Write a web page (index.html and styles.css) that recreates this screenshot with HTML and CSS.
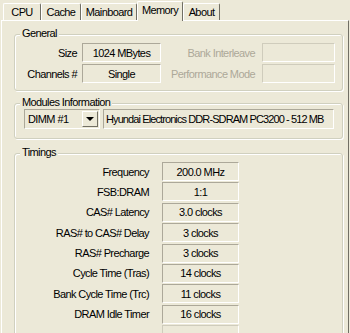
FILE: index.html
```html
<!DOCTYPE html>
<html lang="en">
<head>
    <meta charset="UTF-8">
    <title>CPU-Z Memory</title>
    <link rel="stylesheet" href="styles.css">
</head>
<body>
    <!-- tab strip -->
    <div class="tabs">
        <div class="tab tab-cpu">CPU</div>
        <div class="tab tab-cache">Cache</div>
        <div class="tab tab-board">Mainboard</div>
        <div class="tab tab-mem active">Memory</div>
        <div class="tab tab-about">About</div>
    </div>

    <div class="page">
        <!-- General -->
        <div class="group general">
            <div class="group-title">General</div>
            <div class="gen-rows">
                <div class="gen-row">
                    <span class="gen-label">Size</span>
                    <span class="field gen-val">1024 MBytes</span>
                    <span class="gen-label2 disabled">Bank Interleave</span>
                    <span class="field off gen-val2"></span>
                </div>
                <div class="gen-row">
                    <span class="gen-label">Channels #</span>
                    <span class="field gen-val">Single</span>
                    <span class="gen-label2 disabled">Performance Mode</span>
                    <span class="field off gen-val2"></span>
                </div>
            </div>
        </div>

        <!-- Modules Information -->
        <div class="group modules">
            <div class="group-title">Modules Information</div>
            <div class="mod-row">
                <div class="combo">
                    <span class="combo-text">DIMM #1</span>
                    <span class="combo-btn"><i class="arrow"></i></span>
                </div>
                <div class="field mod-desc">Hyundai Electronics DDR-SDRAM PC3200 - 512 MB</div>
            </div>
        </div>

        <!-- Timings -->
        <div class="group timings">
            <div class="group-title">Timings</div>
            <div class="tim-grid">
                <span class="tim-label">Frequency</span><span class="field tim-val">200.0 MHz</span>
                <span class="tim-label">FSB:DRAM</span><span class="field tim-val">1:1</span>
                <span class="tim-label">CAS# Latency</span><span class="field tim-val">3.0 clocks</span>
                <span class="tim-label">RAS# to CAS# Delay</span><span class="field tim-val">3 clocks</span>
                <span class="tim-label">RAS# Precharge</span><span class="field tim-val">3 clocks</span>
                <span class="tim-label">Cycle Time (Tras)</span><span class="field tim-val">14 clocks</span>
                <span class="tim-label">Bank Cycle Time (Trc)</span><span class="field tim-val">11 clocks</span>
                <span class="tim-label">DRAM Idle Timer</span><span class="field tim-val">16 clocks</span>
                <span class="tim-label"></span><span class="field off tim-val"></span>
            </div>
        </div>
    </div>
</body>
</html>
```

FILE: styles.css
```css
body { margin: 0; width: 350px; height: 333px; overflow: hidden; background: #ECE9D8; color: #000; font-family: "Liberation Sans", Arial, sans-serif; font-size: 11px; letter-spacing: -0.6px; }

/* tabs */
.tabs { display: flex; align-items: flex-end; height: 20px; padding-left: 3px; }
.tab { box-sizing: border-box; height: 17px; display: flex; align-items: center; justify-content: center; padding-bottom: 1px; border-top: 1px solid #fff; border-left: 1px solid #fff; border-right: 1px solid #716F64; border-radius: 2px 2px 0 0; }
.tab-cpu { width: 38px; }
.tab-cache { width: 40px; }
.tab-board { width: 56px; }
.tab-mem { width: 46px; }
.tab-about { width: 37px; }
.tab.active { position: relative; z-index: 1; height: 20px; margin-bottom: -1px; padding-bottom: 3px; background: #ECE9D8; }

/* tab page */
.page { height: 312px; margin: 0 1px; padding-left: 12px; border-top: 1px solid #fff; border-left: 1px solid #fff; border-right: 1px solid #716F64; }

/* group boxes */
.group { box-sizing: border-box; width: 329px; border: 1px solid #D0D0BF; border-radius: 3px; box-shadow: inset 1px 1px 0 #fff, 1px 1px 0 #fff; }
.group-title { display: table; margin: -8px 0 0 5px; padding: 0 2px; line-height: 13px; background: #ECE9D8; }
.general { margin-top: 13px; padding-bottom: 7px; }
.modules { margin-top: 12px; padding-bottom: 9px; }
.timings { margin-top: 14px; height: 200px; }

/* sunken read-only fields */
.field { box-sizing: border-box; display: flex; align-items: center; justify-content: center; white-space: nowrap; overflow: hidden; border: 1px solid; border-color: #ACA899 #fff #fff #ACA899; }
.field.off { border-color: #CFCCBC #fff #fff #CFCCBC; }
.disabled { color: #ACA899; }

/* general rows */
.gen-rows { display: flex; flex-direction: column; gap: 2px; padding-top: 3px; }
.gen-row { display: flex; align-items: center; height: 19px; }
.gen-label { width: 62px; text-align: right; margin-right: 5px; }
.gen-val { width: 79px; height: 19px; }
.gen-label2 { width: 94px; text-align: right; margin-right: 7px; }
.gen-val2 { width: 73px; height: 19px; }

/* modules */
.mod-row { display: flex; gap: 3px; padding-left: 9px; }
.combo { box-sizing: border-box; display: flex; width: 76px; height: 20px; padding: 1px; border: 1px solid; border-color: #ACA899 #fff #fff #ACA899; }
.combo-text { flex: 1; display: flex; align-items: center; padding-left: 2px; }
.combo-btn { box-sizing: border-box; width: 16px; display: flex; align-items: center; justify-content: center; border: 1px solid; border-color: #fff #716F64 #716F64 #fff; }
.arrow { width: 0; height: 0; border-left: 4px solid transparent; border-right: 4px solid transparent; border-top: 4px solid #000; }
.mod-desc { width: 231px; height: 20px; justify-content: flex-start; padding-left: 2px; letter-spacing: -0.9px; }

/* timings */
.tim-grid { display: grid; grid-template-columns: 134px 77px; grid-auto-rows: 19px; column-gap: 13px; row-gap: 1.4px; padding-top: 3px; }
.tim-label { display: flex; align-items: center; justify-content: flex-end; white-space: nowrap; }
.tim-val { height: 19px; }
```
